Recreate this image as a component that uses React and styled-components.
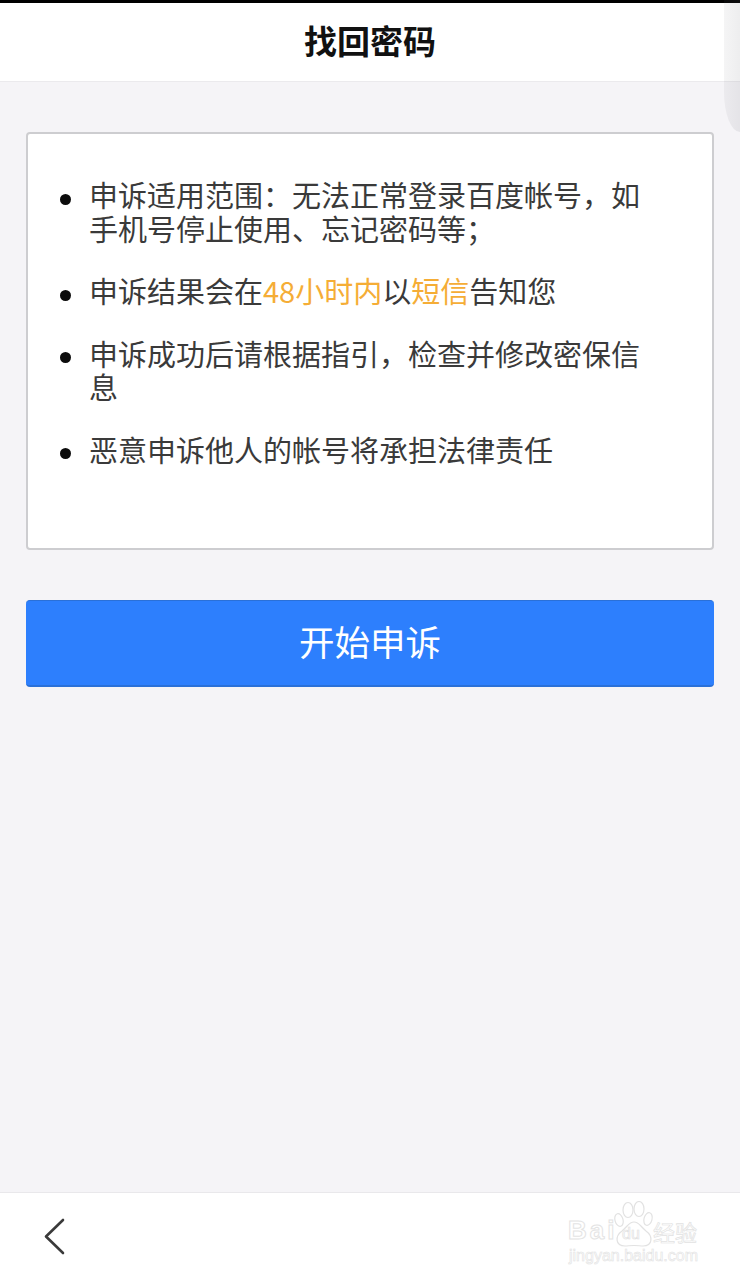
import React from "react";
import styled, { createGlobalStyle } from "styled-components";

const Global = createGlobalStyle`
  html, body { margin: 0; padding: 0; }
  body { background: #f5f4f7; font-family: "Noto Sans CJK SC", "Noto Sans", sans-serif; }
`;

const Page = styled.div`
  position: relative;
  width: 740px;
  height: 1280px;
  display: flex;
  flex-direction: column;
  overflow: hidden;
  background: #f5f4f7;
`;

const StatusStrip = styled.div`
  height: 3px;
  flex: none;
  background: #000;
`;

const Header = styled.header`
  height: 78px;
  flex: none;
  display: flex;
  align-items: center;
  justify-content: center;
  background: #fff;
  border-bottom: 1px solid #ebeaed;
`;

const Title = styled.h1`
  margin: 0 0 4px;
  font-size: 33px;
  line-height: 40px;
  font-weight: 700;
  color: #111;
`;

const EdgeHandle = styled.div`
  position: absolute;
  top: 0;
  right: 0;
  width: 16px;
  height: 132px;
  border-radius: 0 0 0 16px / 0 0 0 40px;
  background: linear-gradient(90deg, rgba(110, 110, 120, 0.07), rgba(110, 110, 120, 0.12));
`;

const Main = styled.main`
  flex: 1;
  display: flex;
  flex-direction: column;
  gap: 50px;
  padding: 50px 26px 0;
`;

const Card = styled.section`
  height: 418px;
  box-sizing: border-box;
  background: #fff;
  border: 2px solid #cdcdd0;
  border-radius: 4px;
  padding: 44px 69px 0 61px;
`;

const List = styled.ul`
  margin: 0;
  padding: 0;
  list-style: none;
  display: flex;
  flex-direction: column;
  gap: 29px;
`;

const Item = styled.li`
  position: relative;
  font-size: 29px;
  line-height: 33.5px;
  color: #3a3a3a;

  &::before {
    content: "";
    position: absolute;
    left: -29.5px;
    top: 15.5px;
    width: 11px;
    height: 11px;
    border-radius: 50%;
    background: #0c0c0c;
  }
`;

const Accent = styled.span`
  color: #f5ad36;
`;

const PrimaryButton = styled.button`
  height: 87px;
  flex: none;
  border: 0;
  border-top: 1px solid #2a70d8;
  border-bottom: 2px solid #2a70d8;
  border-radius: 4px;
  background: #2d7ffd;
  color: #fff;
  font: 400 35.5px "Noto Sans CJK SC", sans-serif;
  padding: 0 0 5px;
`;

const Footer = styled.footer`
  height: 87px;
  flex: none;
  display: flex;
  align-items: center;
  justify-content: space-between;
  padding: 0 41px 0 43px;
  background: #fff;
  border-top: 1px solid #e9e8eb;
`;

const BackIcon = styled.svg`
  width: 24px;
  height: 40px;
  margin-bottom: 2px;
  display: block;
`;

const Watermark = styled.div`
  position: relative;
  width: 132px;
  height: 64px;
  margin-bottom: 2px;
`;

const Paw = styled.svg`
  position: absolute;
  left: 47px;
  top: -3px;
  width: 40px;
  height: 46px;
`;

const Brand = styled.span`
  position: absolute;
  font-family: "Liberation Sans", sans-serif;
  color: #fff;
  -webkit-text-stroke: 1px #e4e4e4;
  line-height: 1;
`;

const BrandBai = styled(Brand)`
  left: 1px;
  top: 13px;
  font-size: 26px;
  font-weight: 700;
  letter-spacing: 3px;
`;

const BrandDu = styled(Brand)`
  left: 55px;
  top: 22px;
  font-size: 16px;
  -webkit-text-stroke: 0.7px #e2e2e2;
`;

const BrandCn = styled(Brand)`
  left: 86px;
  top: 16px;
  font-family: "Noto Sans CJK SC", sans-serif;
  font-size: 22px;
  -webkit-text-stroke: 0.7px #e2e2e2;
`;

const BrandUrl = styled.span`
  position: absolute;
  left: 2px;
  top: 44px;
  width: 130px;
  font: 16px/16px "Liberation Sans", sans-serif;
  color: #fff;
  -webkit-text-stroke: 0.6px #e2e2e2;
  white-space: nowrap;
`;

export default function App() {
  return (
    <Page>
      <Global />
      <StatusStrip />
      <Header>
        <Title>找回密码</Title>
      </Header>
      <EdgeHandle />
      <Main>
        <Card>
          <List>
            <Item>{"申诉适用范围\uFF1A无法正常登录百度帐号\uFF0C如手机号停止使用、忘记密码等\uFF1B"}</Item>
            <Item>
              申诉结果会在<Accent>48小时内</Accent>以<Accent>短信</Accent>告知您
            </Item>
            <Item>{"申诉成功后请根据指引\uFF0C检查并修改密保信息"}</Item>
            <Item>恶意申诉他人的帐号将承担法律责任</Item>
          </List>
        </Card>
        <PrimaryButton>开始申诉</PrimaryButton>
      </Main>
      <Footer>
        <BackIcon viewBox="0 0 24 40" fill="none" stroke="#3a3a3a" strokeWidth="2.6" strokeLinecap="round" strokeLinejoin="round">
          <path d="M20 4 3 20.5 20 37" />
        </BackIcon>
        <Watermark>
          <Paw viewBox="0 0 40 46" fill="#fff" stroke="#e2e2e2" strokeWidth="1.2">
            <ellipse cx="5" cy="19" rx="4" ry="6.5" transform="rotate(-15 5 19)" />
            <ellipse cx="14" cy="9" rx="5" ry="7.5" />
            <ellipse cx="25" cy="8" rx="5" ry="7.5" />
            <ellipse cx="34" cy="18" rx="4" ry="6.5" transform="rotate(15 34 18)" />
            <path d="M20 21c-5 0-6 4-12 9-7 5-7 15 3 15 3 0 5-.5 9-.5s6 .5 9 .5c10 0 10-10 3-15-6-5-7-9-12-9z" />
          </Paw>
          <BrandBai>Bai</BrandBai>
          <BrandDu>du</BrandDu>
          <BrandCn>经验</BrandCn>
          <BrandUrl>jingyan.baidu.com</BrandUrl>
        </Watermark>
      </Footer>
    </Page>
  );
}
